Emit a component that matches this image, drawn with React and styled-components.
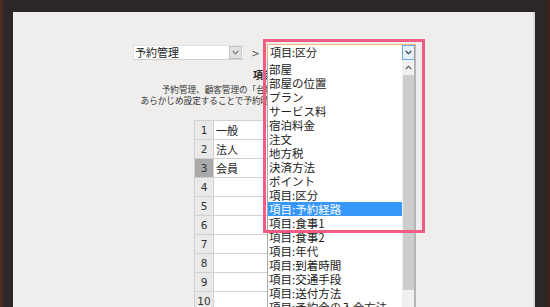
import { Fragment } from "react";
import styled, { createGlobalStyle } from "styled-components";

const GlobalStyle = createGlobalStyle`
  html, body {
    margin: 0;
    padding: 0;
    background: #2c2726;
  }
  * {
    box-sizing: border-box;
  }
`;

const JP = `"Noto Sans CJK JP", "Noto Sans", sans-serif`;

const Frame = styled.div`
  width: 550px;
  height: 307px;
  display: flex;
  padding: 12px 12px 0 10px;
  background: #2c2726;
  border-left: 3px solid #4a2b1e;
  border-right: 3px solid #3e251b;
  overflow: hidden;
`;

const Paper = styled.div`
  flex: 1;
  background: #efeeec;
  border-right: 2px solid #d8d8d6;
  display: flex;
  flex-direction: column;
  align-items: center;
  font-family: ${JP};
  color: #222;
`;

const SelectRow = styled.div`
  display: flex;
  align-items: center;
  margin-top: 32px;
  padding-left: 3px;
`;

const Select = styled.div`
  position: relative;
  width: ${(p) => p.w}px;
  height: ${(p) => (p.focused ? 17 : 15)}px;
  display: flex;
  align-items: center;
  background: #fff;
  border: 1px solid ${(p) => (p.focused ? "#f6b27a" : "#e2e2e2")};
  border-bottom-color: ${(p) => (p.focused ? "#f6b27a" : "#cfcfcf")};
`;

const SelectText = styled.span`
  flex: 1;
  padding-left: ${(p) => (p.focused ? 2 : 1)}px;
  font-size: 11px;
  line-height: 13px;
  color: #222;
  white-space: nowrap;
`;

const DropButton = styled.span`
  width: 13px;
  height: 100%;
  display: flex;
  align-items: center;
  justify-content: center;
  background: ${(p) => (p.focused ? "#e3f0fb" : "#e0e0e0")};
  border: 1px solid ${(p) => (p.focused ? "#6fa9e2" : "#c4c4c4")};
  margin-right: ${(p) => (p.focused ? 0 : 1)}px;
`;

const Sep = styled.span`
  width: 23px;
  text-align: center;
  font-family: "DejaVu Sans", sans-serif;
  font-size: 10px;
  color: #555;
  padding-top: 2px;
`;

const DropList = styled.div`
  position: absolute;
  top: 100%;
  left: -1px;
  width: 149px;
  height: 260px;
  display: flex;
  background: #fff;
  border-left: 1px solid #a9a9a9;
  border-right: 2px solid #b5b5b5;
  z-index: 2;
`;

const Items = styled.div`
  flex: 1;
  padding-top: 2px;
  overflow: hidden;
`;

const Item = styled.div`
  height: 14px;
  line-height: 14px;
  padding-left: 1px;
  font-size: 11.5px;
  white-space: nowrap;
  color: ${(p) => (p.selected ? "#fff" : "#222")};
  background: ${(p) => (p.selected ? "#3797fb" : "transparent")};
`;

const ScrollBar = styled.div`
  width: 12px;
  display: flex;
  flex-direction: column;
  background: #f0f0f0;
`;

const UpArrow = styled.div`
  height: 15px;
  display: flex;
  align-items: center;
  justify-content: center;
`;

const Thumb = styled.div`
  height: 215px;
  margin-left: 1px;
  background: #cdcdcd;
`;

const Highlight = styled.div`
  position: absolute;
  left: -5px;
  top: -6px;
  width: 162px;
  height: 194px;
  border: 3px solid #f25c82;
  pointer-events: none;
  z-index: 3;
`;

const Title = styled.div`
  margin-top: 8px;
  font-size: 10px;
  line-height: 12px;
  font-weight: 700;
`;

const Desc = styled.div`
  margin-top: 3px;
  font-size: 8.6px;
  line-height: 11px;
  text-align: center;
  color: #333;
  white-space: nowrap;
`;

const Grid = styled.div`
  margin-top: 14px;
  width: 158px;
  display: grid;
  grid-template-columns: 18px 1fr;
  grid-auto-rows: 18px;
  gap: 1px;
  padding: 1px;
  background: #d0d0d0;
`;

const NumCell = styled.div`
  display: flex;
  align-items: center;
  justify-content: center;
  font-family: "DejaVu Sans", sans-serif;
  font-size: 10.5px;
  color: #333;
  background: ${(p) => (p.active ? "#a9a9a9" : "#e9e9e9")};
`;

const DataCell = styled.div`
  display: flex;
  align-items: center;
  padding-left: 2px;
  font-size: 11px;
  background: #fff;
`;

const Chevron = ({ up, color = "#444" }) => (
  <svg width="7" height="5" viewBox="0 0 7 5">
    <polyline
      points={up ? "0.8,4 3.5,1.2 6.2,4" : "0.8,1 3.5,3.8 6.2,1"}
      fill="none"
      stroke={color}
      strokeWidth="1.1"
    />
  </svg>
);

const options = [
  "部屋",
  "部屋の位置",
  "プラン",
  "サービス料",
  "宿泊料金",
  "注文",
  "地方税",
  "決済方法",
  "ポイント",
  "項目:区分",
  "項目:予約経路",
  "項目:食事1",
  "項目:食事2",
  "項目:年代",
  "項目:到着時間",
  "項目:交通手段",
  "項目:送付方法",
  "項目:予約金の入金方法",
  "項目:その他",
];

const rows = ["一般", "法人", "会員", "", "", "", "", "", "", ""];

const App = () => {
  const selected = 10;
  const activeRow = 2;
  return (
    <>
      <GlobalStyle />
      <Frame>
        <Paper>
          <SelectRow>
            <Select w={111}>
              <SelectText>予約管理</SelectText>
              <DropButton>
                <Chevron color="#777" />
              </DropButton>
            </Select>
            <Sep>&gt;</Sep>
            <Select w={149} focused>
              <SelectText focused>項目:区分</SelectText>
              <DropButton focused>
                <Chevron color="#333" />
              </DropButton>
              <DropList>
                <Items>
                  {options.map((o, i) => (
                    <Item key={o} selected={i === selected}>
                      {o}
                    </Item>
                  ))}
                </Items>
                <ScrollBar>
                  <UpArrow>
                    <Chevron up color="#555" />
                  </UpArrow>
                  <Thumb />
                </ScrollBar>
              </DropList>
              <Highlight />
            </Select>
          </SelectRow>
          <Title>項目設定</Title>
          <Desc>
            予約管理、顧客管理の「台帳」で使う項目を登録します。
            <br />
            あらかじめ設定することで予約時の入力作業がスムーズになります。
          </Desc>
          <Grid>
            {rows.map((r, i) => (
              <Fragment key={i}>
                <NumCell active={i === activeRow}>{i + 1}</NumCell>
                <DataCell>{r}</DataCell>
              </Fragment>
            ))}
          </Grid>
        </Paper>
      </Frame>
    </>
  );
};

export default App;
